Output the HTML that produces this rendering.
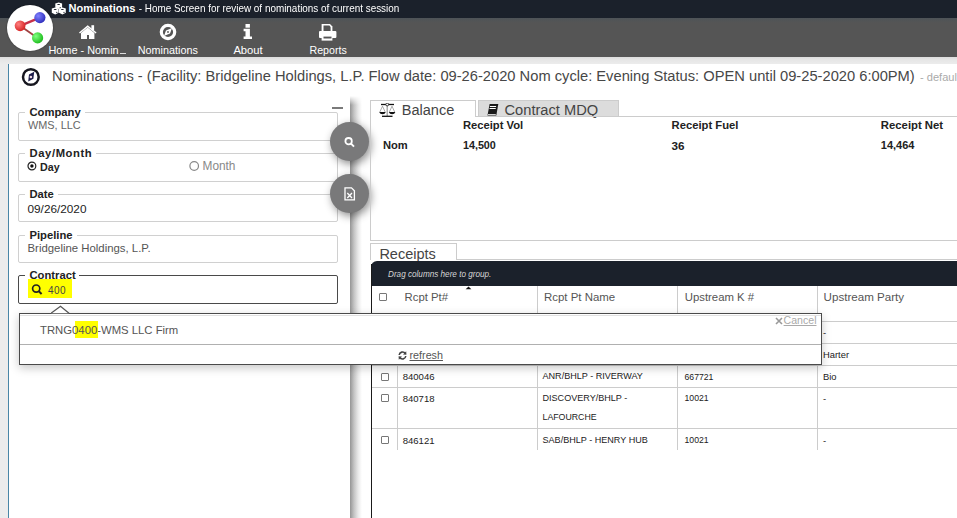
<!DOCTYPE html>
<html><head><meta charset="utf-8"><style>
html,body{margin:0;padding:0;}
body{width:957px;height:518px;overflow:hidden;position:relative;background:#fff;font-family:"Liberation Sans", sans-serif;}
.t{position:absolute;white-space:nowrap;line-height:1;}
</style></head><body>
<div style="position:absolute;left:0px;top:0px;width:957px;height:18px;background:#1b212b"></div><div style="position:absolute;left:0px;top:18px;width:957px;height:39px;background:linear-gradient(#4e5358 0px,#545556 4px,#555 6px)"></div><div style="position:absolute;left:0px;top:57px;width:957px;height:7px;background:linear-gradient(#dcdcdc,#e6e6e6 40%,#ececec)"></div><div style="position:absolute;left:0px;top:64px;width:8px;height:454px;background:#ececec"></div><div style="position:absolute;left:8px;top:64px;width:1px;height:454px;background:#4a86a6"></div><div class="t" style="left:68.5px;top:3.44px;font-size:11.06px;color:#fff;font-weight:bold;font-style:normal;">Nominations</div><div class="t" style="left:135.6px;top:3.07px;font-size:10.9px;color:#fff;font-weight:normal;font-style:normal;transform:scaleX(0.91);transform-origin:0 0">&nbsp;- Home Screen for review of nominations of current session</div><div class="t" style="left:48.4px;top:44.96px;font-size:10.92px;color:#fff;font-weight:normal;font-style:normal;">Home - Nomin</div><div style="position:absolute;left:120px;top:53px;width:5.5px;height:1px;background:#ddd"></div><div class="t" style="left:137.8px;top:45.06px;font-size:10.8px;color:#fff;font-weight:normal;font-style:normal;">Nominations</div><div class="t" style="left:233.4px;top:45.31px;font-size:11.21px;color:#fff;font-weight:normal;font-style:normal;">About</div><div class="t" style="left:309.5px;top:45.18px;font-size:10.65px;color:#fff;font-weight:normal;font-style:normal;">Reports</div><div style="position:absolute;left:7px;top:5px;width:46px;height:46px;background:#fff;border-radius:50%;box-shadow:0 0 2px rgba(0,0,0,.4)"></div><div class="t" style="left:52.1px;top:68.76px;font-size:14.69px;color:#474747;font-weight:normal;font-style:normal;">Nominations - (Facility: Bridgeline Holdings, L.P. Flow date: 09-26-2020 Nom cycle: Evening Status: OPEN until 09-25-2020 6:00PM)</div><div class="t" style="left:920px;top:72.43px;font-size:11.07px;color:#aaa;font-weight:normal;font-style:normal;">- default</div><div style="position:absolute;left:350px;top:96px;width:12px;height:422px;-webkit-mask-image:linear-gradient(to bottom,transparent 0,#000 9px);mask-image:linear-gradient(to bottom,transparent 0,#000 9px);background:linear-gradient(to right,#959595 0px,#c4c4c4 4px,#e8e8e8 8px,#fafafa 11px,#fff 12px)"></div><div style="position:absolute;left:18px;top:112px;width:320px;height:29px;border:1px solid #d0d0d0;box-sizing:border-box;border-radius:2px"></div><div style="position:absolute;left:25px;top:110px;width:60px;height:5px;background:#fff"></div><div class="t" style="left:29.5px;top:106.69px;font-size:11.24px;color:#222;font-weight:bold;font-style:normal;">Company</div><div class="t" style="left:28px;top:120.37px;font-size:10.9px;color:#666;font-weight:normal;font-style:normal;">WMS, LLC</div><div style="position:absolute;left:18px;top:153px;width:320px;height:29px;border:1px solid #d0d0d0;box-sizing:border-box;border-radius:2px"></div><div style="position:absolute;left:25px;top:151px;width:71px;height:5px;background:#fff"></div><div class="t" style="left:29.5px;top:147.69px;font-size:11.24px;color:#222;font-weight:bold;font-style:normal;letter-spacing:0.6px">Day/Month</div><div class="t" style="left:40px;top:162.46px;font-size:10.68px;color:#222;font-weight:bold;font-style:normal;">Day</div><div class="t" style="left:202.5px;top:161.45px;font-size:11.87px;color:#888;font-weight:normal;font-style:normal;">Month</div><div style="position:absolute;left:18px;top:194px;width:320px;height:28px;border:1px solid #d0d0d0;box-sizing:border-box;border-radius:2px"></div><div style="position:absolute;left:25px;top:192px;width:33px;height:5px;background:#fff"></div><div class="t" style="left:29.5px;top:189.19px;font-size:11.24px;color:#222;font-weight:bold;font-style:normal;">Date</div><div class="t" style="left:27.5px;top:202.82px;font-size:11.79px;color:#222;font-weight:normal;font-style:normal;">09/26/2020</div><div style="position:absolute;left:18px;top:235px;width:320px;height:28px;border:1px solid #d0d0d0;box-sizing:border-box;border-radius:2px"></div><div style="position:absolute;left:25px;top:233px;width:52px;height:5px;background:#fff"></div><div class="t" style="left:29.5px;top:229.69px;font-size:11.24px;color:#222;font-weight:bold;font-style:normal;">Pipeline</div><div class="t" style="left:27.5px;top:243.36px;font-size:11.39px;color:#555;font-weight:normal;font-style:normal;">Bridgeline Holdings, L.P.</div><div style="position:absolute;left:18px;top:275px;width:320px;height:29px;border:1px solid #4a4a4a;box-sizing:border-box;border-radius:2px"></div><div style="position:absolute;left:25px;top:273px;width:54px;height:5px;background:#fff"></div><div class="t" style="left:29.5px;top:270.39px;font-size:11.24px;color:#222;font-weight:bold;font-style:normal;">Contract</div><div style="position:absolute;left:28.3px;top:279px;width:43.6px;height:19.4px;background:#ffff00"></div><div class="t" style="left:48px;top:285.84px;font-size:10px;color:#444;font-weight:normal;font-style:normal;letter-spacing:0.4px">400</div><div style="position:absolute;left:332px;top:106.5px;width:11px;height:2.5px;background:#7a7a7a"></div><div style="position:absolute;left:330px;top:122px;width:39px;height:39px;background:#79797a;border-radius:50%;box-shadow:2px 3px 8px rgba(0,0,0,.45)"></div><div style="position:absolute;left:330px;top:174px;width:39px;height:39px;background:#79797a;border-radius:50%;box-shadow:2px 3px 8px rgba(0,0,0,.45)"></div><div style="position:absolute;left:370px;top:100px;width:106px;height:17px;background:#fff;border:1px solid #ccc;border-bottom:none;box-sizing:border-box"></div><div style="position:absolute;left:478px;top:100px;width:141px;height:17px;background:#dcdcdc;border:1px solid #ccc;border-bottom:none;box-sizing:border-box"></div><div class="t" style="left:401.7px;top:103.07px;font-size:14.56px;color:#444;font-weight:normal;font-style:normal;">Balance</div><div class="t" style="left:504.5px;top:102.99px;font-size:14.66px;color:#444;font-weight:normal;font-style:normal;">Contract MDQ</div><div style="position:absolute;left:476px;top:116px;width:481px;height:1px;background:#ccc"></div><div style="position:absolute;left:370px;top:116px;width:1px;height:125px;background:#ccc"></div><div style="position:absolute;left:370px;top:240px;width:587px;height:1px;background:#ccc"></div><div class="t" style="left:462.9px;top:120.19px;font-size:11.23px;color:#222;font-weight:bold;font-style:normal;">Receipt Vol</div><div class="t" style="left:671.6px;top:120.18px;font-size:11.25px;color:#222;font-weight:bold;font-style:normal;">Receipt Fuel</div><div class="t" style="left:880.8px;top:120.10px;font-size:11.34px;color:#222;font-weight:bold;font-style:normal;">Receipt Net</div><div class="t" style="left:382.9px;top:140.05px;font-size:11.16px;color:#222;font-weight:bold;font-style:normal;">Nom</div><div class="t" style="left:462.9px;top:140.37px;font-size:10.79px;color:#222;font-weight:bold;font-style:normal;">14,500</div><div class="t" style="left:671.6px;top:139.60px;font-size:11.69px;color:#222;font-weight:bold;font-style:normal;">36</div><div class="t" style="left:880.8px;top:140.20px;font-size:10.99px;color:#222;font-weight:bold;font-style:normal;">14,464</div><div style="position:absolute;left:370px;top:243px;width:87px;height:17px;background:#fff;border:1px solid #ccc;border-bottom:none;box-sizing:border-box"></div><div style="position:absolute;left:457px;top:259px;width:500px;height:1px;background:#ccc"></div><div class="t" style="left:379.4px;top:247.21px;font-size:14.52px;color:#444;font-weight:normal;font-style:normal;">Receipts</div><div style="position:absolute;left:371px;top:261px;width:586px;height:25px;background:#1b212b;border-top-left-radius:6px"></div><div class="t" style="left:388px;top:270.59px;font-size:8.16px;color:#d6d6d6;font-weight:normal;font-style:italic;">Drag columns here to group.</div><div style="position:absolute;left:371px;top:264px;width:1px;height:254px;background:#1a1a1a"></div><div class="t" style="left:404.6px;top:292.20px;font-size:11.34px;color:#555;font-weight:normal;font-style:normal;">Rcpt Pt#</div><div class="t" style="left:544px;top:292.12px;font-size:11.44px;color:#555;font-weight:normal;font-style:normal;">Rcpt Pt Name</div><div class="t" style="left:684.7px;top:292.18px;font-size:11.37px;color:#555;font-weight:normal;font-style:normal;">Upstream K #</div><div class="t" style="left:823.6px;top:291.18px;font-size:11.6px;color:#555;font-weight:normal;font-style:normal;">Upstream Party</div><div style="position:absolute;left:537px;top:286px;width:1px;height:164px;background:#ccc"></div><div style="position:absolute;left:677px;top:286px;width:1px;height:164px;background:#ccc"></div><div style="position:absolute;left:817px;top:286px;width:1px;height:164px;background:#ccc"></div><div style="position:absolute;left:397px;top:321px;width:1px;height:129px;background:#ccc"></div><div style="position:absolute;left:372px;top:321px;width:585px;height:1px;background:#ccc"></div><div style="position:absolute;left:372px;top:343px;width:585px;height:1px;background:#ccc"></div><div style="position:absolute;left:372px;top:365px;width:585px;height:1px;background:#ccc"></div><div style="position:absolute;left:372px;top:387px;width:585px;height:1px;background:#ccc"></div><div style="position:absolute;left:372px;top:428px;width:585px;height:1px;background:#ccc"></div><div style="position:absolute;left:378.5px;top:293px;width:8px;height:8px;border:1px solid #777;box-sizing:border-box;border-radius:1px"></div><div style="position:absolute;left:380.5px;top:328px;width:8px;height:8px;border:1px solid #777;box-sizing:border-box;border-radius:1px"></div><div class="t" style="left:823px;top:327.64px;font-size:9.4px;color:#222;font-weight:normal;font-style:normal;">-</div><div style="position:absolute;left:380.5px;top:350.6px;width:8px;height:8px;border:1px solid #777;box-sizing:border-box;border-radius:1px"></div><div class="t" style="left:823px;top:350.24px;font-size:9.4px;color:#222;font-weight:normal;font-style:normal;">Harter</div><div style="position:absolute;left:380.5px;top:372.5px;width:8px;height:8px;border:1px solid #777;box-sizing:border-box;border-radius:1px"></div><div class="t" style="left:402.7px;top:372.01px;font-size:9.56px;color:#222;font-weight:normal;font-style:normal;">840046</div><div class="t" style="left:542.5px;top:372.42px;font-size:9.07px;color:#222;font-weight:normal;font-style:normal;">ANR/BHLP - RIVERWAY</div><div class="t" style="left:684.5px;top:372.74px;font-size:8.69px;color:#222;font-weight:normal;font-style:normal;">667721</div><div class="t" style="left:823px;top:372.14px;font-size:9.4px;color:#222;font-weight:normal;font-style:normal;">Bio</div><div style="position:absolute;left:380.5px;top:394px;width:8px;height:8px;border:1px solid #777;box-sizing:border-box;border-radius:1px"></div><div class="t" style="left:402.7px;top:393.51px;font-size:9.56px;color:#222;font-weight:normal;font-style:normal;">840718</div><div class="t" style="left:542.5px;top:393.92px;font-size:9.07px;color:#222;font-weight:normal;font-style:normal;">DISCOVERY/BHLP -</div><div class="t" style="left:684.5px;top:394.24px;font-size:8.69px;color:#222;font-weight:normal;font-style:normal;">10021</div><div class="t" style="left:823px;top:393.64px;font-size:9.4px;color:#222;font-weight:normal;font-style:normal;">-</div><div style="position:absolute;left:380.5px;top:436px;width:8px;height:8px;border:1px solid #777;box-sizing:border-box;border-radius:1px"></div><div class="t" style="left:402.7px;top:435.51px;font-size:9.56px;color:#222;font-weight:normal;font-style:normal;">846121</div><div class="t" style="left:542.5px;top:435.92px;font-size:9.07px;color:#222;font-weight:normal;font-style:normal;">SAB/BHLP - HENRY HUB</div><div class="t" style="left:684.5px;top:436.24px;font-size:8.69px;color:#222;font-weight:normal;font-style:normal;">10021</div><div class="t" style="left:823px;top:435.64px;font-size:9.4px;color:#222;font-weight:normal;font-style:normal;">-</div><div class="t" style="left:542.5px;top:413.16px;font-size:8.79px;color:#222;font-weight:normal;font-style:normal;">LAFOURCHE</div><div style="position:absolute;left:19px;top:313px;width:803px;height:52px;background:#fff;border:1px solid #4a4a4a;box-sizing:border-box;box-shadow:0 3px 9px rgba(0,0,0,.22)"></div><div style="position:absolute;left:20px;top:344px;width:801px;height:1px;background:#b0b0b0"></div><div style="position:absolute;left:20px;top:315px;width:801px;height:1px;background:#e0e0e0"></div><div style="position:absolute;left:75px;top:321px;width:23px;height:17px;background:#ffff00"></div><div class="t" style="left:40px;top:325.22px;font-size:11.32px;color:#555;font-weight:normal;font-style:normal;">TRNG0400-WMS LLC Firm</div><div class="t" style="left:409.5px;top:349.69px;font-size:10.76px;color:#555;font-weight:normal;font-style:normal;text-decoration:underline">refresh</div><div class="t" style="left:783.6px;top:315.05px;font-size:10.57px;color:#aaa;font-weight:normal;font-style:normal;text-decoration:underline">Cancel</div><svg style="position:absolute;left:7px;top:5px;" width="46" height="46" viewBox="7 5 46 46">
<defs>
<radialGradient id="gr" cx="35%" cy="35%" r="65%"><stop offset="0" stop-color="#ff8080"/><stop offset="1" stop-color="#d82828"/></radialGradient>
<radialGradient id="gb" cx="35%" cy="35%" r="65%"><stop offset="0" stop-color="#8080ff"/><stop offset="1" stop-color="#3434c0"/></radialGradient>
<radialGradient id="gg" cx="35%" cy="35%" r="65%"><stop offset="0" stop-color="#80ff80"/><stop offset="1" stop-color="#22c022"/></radialGradient>
</defs>
<line x1="20.1" y1="25.8" x2="39.9" y2="17.6" stroke="#c83048" stroke-width="2.4"/>
<line x1="20.1" y1="25.8" x2="37.6" y2="37.9" stroke="#a04040" stroke-width="1.8"/>
<circle cx="39.9" cy="17.6" r="5.6" fill="url(#gb)"/>
<circle cx="37.6" cy="37.9" r="5.6" fill="url(#gg)"/>
<circle cx="20.1" cy="25.8" r="5.4" fill="url(#gr)"/>
</svg><svg style="position:absolute;left:51px;top:1.7px;" width="16" height="14" viewBox="0 0 16 14">
<g fill="#fff">
<path d="M4.3 1.6 L7.7 0.6 L11.1 1.6 L11.1 5.8 L7.7 7 L4.3 5.8Z"/>
<path d="M0.8 6.6 L4.2 5.6 L7.6 6.6 L7.6 10.8 L4.2 12.6 L0.8 10.8Z"/>
<path d="M8 6.6 L11.4 5.6 L14.8 6.6 L14.8 10.8 L11.4 12.6 L8 10.8Z"/>
</g>
<g fill="#1b212b">
<ellipse cx="7.6" cy="2.4" rx="1.5" ry="0.5"/>
<ellipse cx="4.2" cy="7.4" rx="1.5" ry="0.5"/>
<ellipse cx="11.4" cy="7.4" rx="1.5" ry="0.5"/>
<circle cx="9.2" cy="5.6" r="0.6"/>
<circle cx="5.8" cy="10.4" r="0.6"/>
<circle cx="13" cy="10.4" r="0.6"/>
</g>
</svg><svg style="position:absolute;left:78px;top:24px;" width="20" height="16" viewBox="0 0 20 16">
<g fill="#fff">
<path d="M1 8.6 L9.7 1.2 L18.6 8.6 L17.6 9.6 L9.7 3.2 L2 9.6Z"/>
<rect x="13.4" y="1.2" width="2.7" height="5.2"/>
<path d="M3 9 L9.7 3.6 L16.4 9 L16.4 15 L11 15 L11 11 L9 11 L9 15 L3 15Z"/>
</g>
</svg><svg style="position:absolute;left:159px;top:23px;" width="18" height="18" viewBox="0 0 18 18">
<circle cx="9" cy="9" r="6.7" fill="none" stroke="#fff" stroke-width="3.2"/>
<path d="M13 5 L11 10.5 L5 13 L7 7.5Z" fill="#fff"/>
<circle cx="9" cy="9" r="0.9" fill="#555"/>
</svg><svg style="position:absolute;left:243px;top:23px;" width="10" height="17" viewBox="0 0 10 17">
<g fill="#fff">
<rect x="2.5" y="1" width="4.4" height="3.7"/>
<path d="M0.6 5.8 L6.9 5.8 L6.9 13.6 L9 13.6 L9 16 L0.6 16 L0.6 13.6 L2.5 13.6 L2.5 8.2 L0.6 8.2Z"/>
</g>
</svg><svg style="position:absolute;left:318px;top:23px;" width="20" height="19" viewBox="0 0 20 19">
<g fill="#fff">
<path d="M3.6 1 L12 1 L14.4 3.4 L14.4 8 L3.6 8Z"/>
<rect x="1" y="8" width="17.4" height="7" rx="1"/>
<rect x="3.6" y="13" width="10.8" height="4.6"/>
</g>
<g fill="#555">
<path d="M5.5 2.6 L11.4 2.6 L12.6 4 L12.6 8 L5.5 8Z"/>
<rect x="5.5" y="13.6" width="8" height="1.9"/>
</g>
</svg><svg style="position:absolute;left:20px;top:66px;" width="22" height="22" viewBox="0 0 22 22">
<circle cx="10.85" cy="11" r="7.85" fill="none" stroke="#16161f" stroke-width="2.5"/>
<path d="M14.2 5.8 L13.4 12.8 L8.2 15.5 L9.0 8.6Z" fill="#1c1c4a"/>
<circle cx="10.9" cy="11" r="1.3" fill="#f0d8e0"/>
</svg><svg style="position:absolute;left:26px;top:160px;" width="12" height="12" viewBox="0 0 12 12">
<circle cx="5.9" cy="6" r="3.9" fill="none" stroke="#222" stroke-width="1.2"/>
<circle cx="5.9" cy="6" r="1.7" fill="#111"/>
</svg><svg style="position:absolute;left:188px;top:160px;" width="12" height="12" viewBox="0 0 12 12">
<circle cx="6.2" cy="6" r="4.3" fill="none" stroke="#888" stroke-width="1.2"/>
</svg><svg style="position:absolute;left:30px;top:282px;" width="14" height="14" viewBox="0 0 14 14">
<circle cx="6.2" cy="6.6" r="3.6" fill="none" stroke="#222" stroke-width="1.7"/>
<line x1="8.8" y1="9.3" x2="11.6" y2="12" stroke="#222" stroke-width="2"/>
</svg><svg style="position:absolute;left:343px;top:135px;" width="14" height="14" viewBox="0 0 14 14">
<circle cx="5.6" cy="6.2" r="3.2" fill="none" stroke="#fff" stroke-width="1.8"/>
<line x1="8" y1="8.6" x2="11" y2="11.6" stroke="#fff" stroke-width="2"/>
</svg><svg style="position:absolute;left:344px;top:187px;" width="12" height="14" viewBox="0 0 12 14">
<path d="M1 0.8 L7.5 0.8 L10.4 3.7 L10.4 12.9 L1 12.9Z" fill="none" stroke="#fff" stroke-width="1.3"/>
<path d="M3.3 6 L8 11 M8 6 L3.3 11" stroke="#fff" stroke-width="1.3"/>
</svg><svg style="position:absolute;left:378px;top:103px;" width="19" height="15" viewBox="0 0 19 15">
<g fill="none" stroke="#111">
<line x1="3" y1="1.5" x2="16" y2="1.5" stroke-width="1.3"/>
<line x1="9.2" y1="1.5" x2="9.2" y2="13" stroke-width="1.2" stroke="#999"/>
<line x1="4" y1="13.3" x2="14.5" y2="13.3" stroke-width="1.3"/>
<path d="M4.5 3.2 L1.8 9 M4.5 3.2 L7.2 9 M14 3.2 L11.3 9 M14 3.2 L16.7 9" stroke-width="0.7" stroke="#888"/>
</g>
<circle cx="9.2" cy="1.5" r="1.4" fill="#fff" stroke="#111" stroke-width="0.8"/>
<path d="M1.2 9 L7.8 9 Q7 11.2 4.5 11.2 Q2 11.2 1.2 9Z" fill="#111"/>
<path d="M10.8 9 L17.4 9 Q16.6 11.2 14.1 11.2 Q11.6 11.2 10.8 9Z" fill="#111"/>
</svg><svg style="position:absolute;left:486px;top:103px;" width="14" height="14" viewBox="0 0 14 14">
<path d="M3.6 1 L12.3 1 L10.3 12.6 L1.5 12.6Z" fill="#1a1a1a"/>
<rect x="4.5" y="3" width="6.2" height="0.9" fill="#fff" transform="skewX(-10)"/>
<rect x="4.5" y="5" width="6.2" height="0.9" fill="#fff" transform="skewX(-10)"/>
<rect x="2" y="11" width="7.8" height="0.8" fill="#fff"/>
</svg><svg style="position:absolute;left:397px;top:350px;" width="11" height="11" viewBox="0 0 11 11">
<path d="M2.2 5 A3.4 3.4 0 0 1 8.3 3.4" fill="none" stroke="#444" stroke-width="1.6"/>
<path d="M9.2 1.2 L9.4 4.8 L6 4.4Z" fill="#444"/>
<path d="M8.8 6 A3.4 3.4 0 0 1 2.7 7.6" fill="none" stroke="#444" stroke-width="1.6"/>
<path d="M1.8 9.8 L1.6 6.2 L5 6.6Z" fill="#444"/>
</svg><svg style="position:absolute;left:775px;top:317px;" width="8" height="8" viewBox="0 0 8 8">
<path d="M1 1 L7 7 M7 1 L1 7" stroke="#999" stroke-width="1.6"/>
</svg><svg style="position:absolute;left:51px;top:305px;" width="19" height="10" viewBox="0 0 19 10">
<path d="M0 8.3 L9.5 1.2 L18 8.3" fill="#fff" stroke="#555" stroke-width="1.2"/>
</svg><svg style="position:absolute;left:465px;top:285.5px;" width="7" height="4" viewBox="0 0 7 4"><path d="M0.6 3.2 L3.5 0.4 L6.4 3.2Z" fill="#111"/></svg>
</body></html>
